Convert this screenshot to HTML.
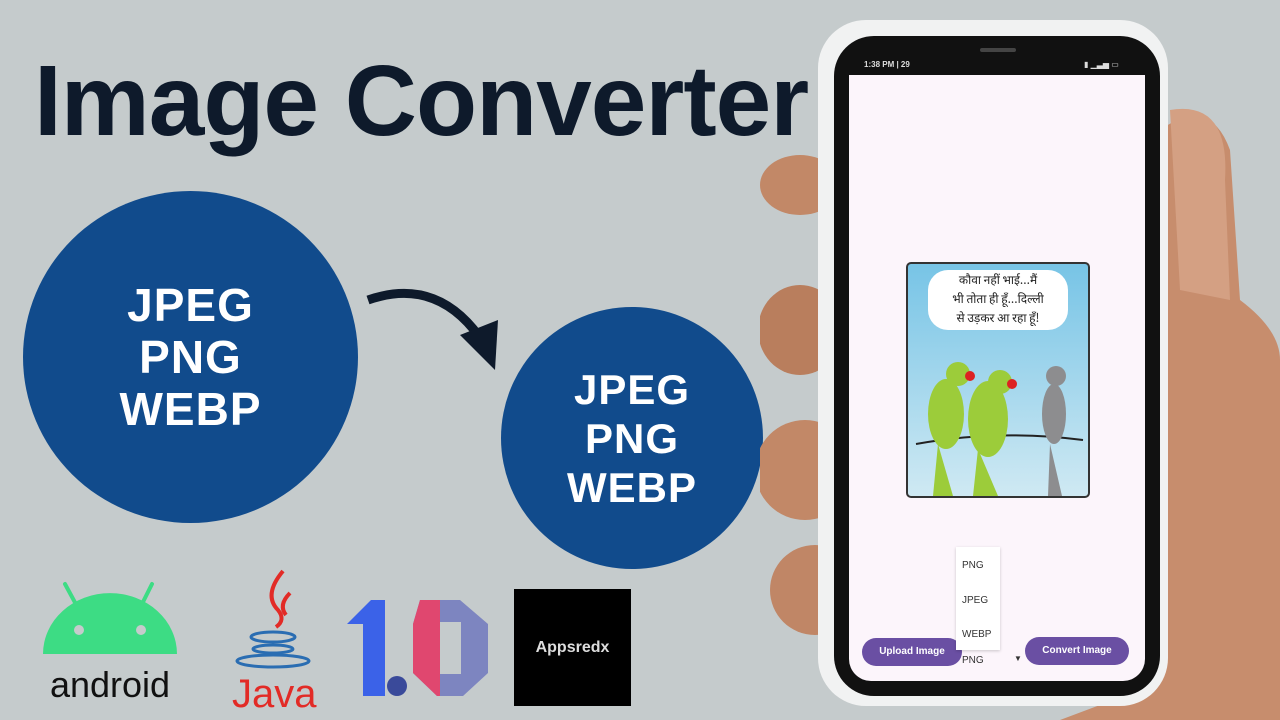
<!DOCTYPE html>
<html><head><meta charset="utf-8"><style>
body{margin:0;width:1280px;height:720px;overflow:hidden;background:#c5cbcc;position:relative;font-family:"Liberation Sans",sans-serif}
.abs{position:absolute}
h1{position:absolute;left:34px;top:44px;margin:0;font-size:100px;font-weight:bold;color:#0e1a2b;letter-spacing:-1px;white-space:nowrap}
.c{position:absolute;border-radius:50%;background:#114b8c;color:#fff;font-weight:bold;text-align:center;display:flex;flex-direction:column;justify-content:center;letter-spacing:1px}
.btn{position:absolute;background:#6a4fa3;color:#fff;font-size:10px;font-weight:bold;border-radius:14px;text-align:center;line-height:28px}
</style></head><body>
<h1>Image Converter</h1>
<div class="c" style="left:23px;top:191px;width:335px;height:332px;font-size:46px;line-height:52px">JPEG<br>PNG<br>WEBP</div>
<div class="c" style="left:501px;top:307px;width:262px;height:262px;font-size:42px;line-height:49px">JPEG<br>PNG<br>WEBP</div>
<svg class="abs" style="left:360px;top:280px" width="150" height="100"><path d="M8 20 Q80 -5 125 65" stroke="#0e1a2b" stroke-width="9" fill="none"/><path d="M100 55 L135 90 L138 40 Z" fill="#0e1a2b"/></svg>

<!-- hand -->
<svg class="abs" style="left:760px;top:0" width="520" height="720">
<path d="M400 130 Q450 95 470 150 L480 300 Q520 330 520 360 L520 720 L300 720 L380 690 L400 120 Z" fill="#c78d6d"/>
<path d="M410 110 Q470 100 465 180 L470 300 L420 290 Z" fill="#d4a083"/>
<ellipse cx="40" cy="185" rx="40" ry="30" fill="#c28867"/>
<ellipse cx="40" cy="330" rx="42" ry="45" fill="#b97e5d"/>
<ellipse cx="45" cy="470" rx="50" ry="50" fill="#c28867"/>
<ellipse cx="55" cy="590" rx="45" ry="45" fill="#c08666"/>
</svg>
<!-- phone -->
<div class="abs" style="left:818px;top:20px;width:350px;height:686px;border-radius:48px;background:#f1f2f2"></div>
<div class="abs" style="left:834px;top:36px;width:326px;height:660px;border-radius:40px;background:#111"></div>
<div class="abs" style="left:849px;top:75px;width:296px;height:606px;border-radius:0 0 22px 22px;background:#fcf5fb"></div>
<div class="abs" style="left:980px;top:48px;width:36px;height:4px;border-radius:2px;background:#444"></div>
<div class="abs" style="left:864px;top:60px;font-size:8px;color:#ddd;font-weight:bold">1:38 PM | 29</div>
<div class="abs" style="left:1084px;top:60px;font-size:8px;color:#ddd">▮ ▁▃▅ ▭</div>
<!-- cartoon -->
<div class="abs" style="left:906px;top:262px;width:180px;height:232px;background:linear-gradient(#77c4e6,#cfe9f3);border:2px solid #333;border-radius:5px;overflow:hidden">
<div style="position:absolute;left:20px;top:6px;width:140px;height:60px;background:#fff;border-radius:20px;font-family:'Noto Sans CJK SC',sans-serif;font-size:12px;line-height:19px;text-align:center;color:#222">कौवा नहीं भाई...मैं<br>भी तोता ही हूँ...दिल्ली<br>से उड़कर आ रहा हूँ!</div>
<svg width="180" height="232" style="position:absolute;left:0;top:0"><path d="M8 180 Q90 165 175 176" stroke="#222" stroke-width="2" fill="none"/>
<ellipse cx="38" cy="150" rx="18" ry="35" fill="#9ccc3a"/><path d="M30 180 L25 232 L45 232 Z" fill="#9ccc3a"/><circle cx="50" cy="110" r="12" fill="#9ccc3a"/><circle cx="62" cy="112" r="5" fill="#d22"/>
<ellipse cx="80" cy="155" rx="20" ry="38" fill="#9ccc3a"/><path d="M70 185 L65 232 L90 232 Z" fill="#9ccc3a"/><circle cx="92" cy="118" r="12" fill="#9ccc3a"/><circle cx="104" cy="120" r="5" fill="#d22"/>
<ellipse cx="146" cy="150" rx="12" ry="30" fill="#8d8d8f"/><circle cx="148" cy="112" r="10" fill="#8d8d8f"/><path d="M142 180 L140 232 L154 232 Z" fill="#8d8d8f"/></svg>
</div>
<div class="btn" style="left:862px;top:638px;width:100px">Upload Image</div>
<div class="btn" style="left:1025px;top:637px;width:104px">Convert Image</div>
<div class="abs" style="left:962px;top:655px;font-size:10px;color:#333">PNG</div>
<div class="abs" style="left:1014px;top:654px;font-size:8px;color:#333">▼</div>
<!-- dropdown -->
<div class="abs" style="left:956px;top:547px;width:44px;height:103px;background:#fff;box-shadow:0 1px 3px rgba(0,0,0,.2);font-size:10px;color:#333">
<div style="position:absolute;left:6px;top:13px">PNG</div><div style="position:absolute;left:6px;top:48px">JPEG</div><div style="position:absolute;left:6px;top:82px">WEBP</div></div>

<!-- android -->
<svg class="abs" style="left:40px;top:578px" width="140" height="125">
<path d="M25 6 L38 30 M112 6 L100 30" stroke="#3ddc84" stroke-width="4" stroke-linecap="round"/>
<path d="M3 76 A66 60 0 0 1 137 76 Z" fill="#3ddc84"/>
<circle cx="39" cy="52" r="5" fill="#c5cbcc"/><circle cx="101" cy="52" r="5" fill="#c5cbcc"/>
<text x="70" y="119" font-size="36" text-anchor="middle" fill="#111" font-family="Liberation Sans">android</text></svg>
<!-- java -->
<svg class="abs" style="left:228px;top:565px" width="95" height="150">
<path d="M55 6 Q35 30 50 45 Q58 55 48 62 M62 28 Q50 40 58 50" stroke="#e22b26" stroke-width="4" fill="none"/>
<ellipse cx="45" cy="72" rx="22" ry="5" stroke="#2a6db2" stroke-width="3" fill="none"/>
<ellipse cx="45" cy="84" rx="20" ry="4" stroke="#2a6db2" stroke-width="3" fill="none"/>
<ellipse cx="45" cy="96" rx="36" ry="6" stroke="#2a6db2" stroke-width="3" fill="none"/>
<text x="4" y="142" font-size="40" fill="#e22b26" font-family="Liberation Sans Narrow,Liberation Sans">Java</text></svg>
<!-- 1.0 -->
<svg class="abs" style="left:345px;top:598px" width="150" height="100">
<path d="M2 26 L26 2 L40 2 L40 98 L18 98 L18 26 Z" fill="#3b62e8"/>
<circle cx="52" cy="88" r="10" fill="#3a4a9a"/>
<path d="M75 2 L115 2 L143 26 L143 75 L118 98 L92 98 L68 75 L68 26 Z M95 24 L95 76 L116 76 L116 24 Z" fill="#7d85c0" fill-rule="evenodd"/>
<path d="M68 26 L75 2 L95 2 L95 98 L92 98 L68 75 Z" fill="#e0476f"/></svg>
<!-- appsredx -->
<div class="abs" style="left:514px;top:589px;width:117px;height:117px;background:#000;color:#ddd;font-weight:bold;font-size:16px;line-height:117px;text-align:center">Appsredx</div>
</body></html>
